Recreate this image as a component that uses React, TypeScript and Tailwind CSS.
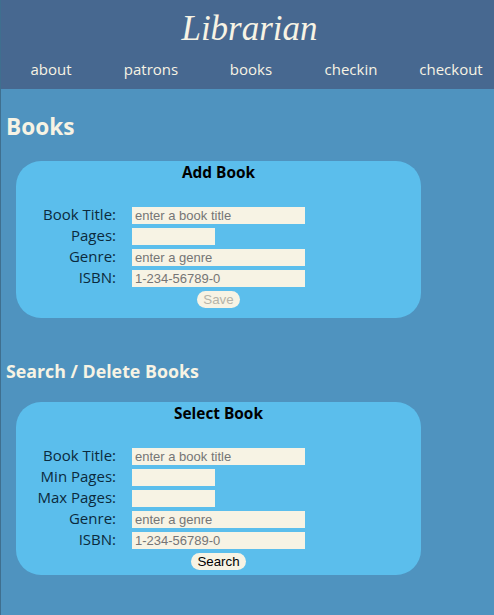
import React from "react";

const navItems = ["about", "patrons", "books", "checkin", "checkout"];

type Field = { label: string; placeholder?: string; short?: boolean };

const addFields: Field[] = [
  { label: "Book Title:", placeholder: "enter a book title" },
  { label: "Pages:", short: true },
  { label: "Genre:", placeholder: "enter a genre" },
  { label: "ISBN:", placeholder: "1-234-56789-0" },
];

const searchFields: Field[] = [
  { label: "Book Title:", placeholder: "enter a book title" },
  { label: "Min Pages:", short: true },
  { label: "Max Pages:", short: true },
  { label: "Genre:", placeholder: "enter a genre" },
  { label: "ISBN:", placeholder: "1-234-56789-0" },
];

const BookForm = ({ title, fields, button, disabled }: { title: string; fields: Field[]; button: string; disabled?: boolean }) => (
  <div className={`ml-[15px] w-[405px] rounded-[25px] bg-[#5bbeec] pt-[2px] ${disabled ? "pb-[10px]" : "pb-[5px]"}`}>
    <h3 className="h-[44px] text-center text-[15.4px] leading-[20px] font-bold text-black">{title}</h3>
    <div className="flex flex-col gap-1">
      {fields.map((f) => (
        <div key={f.label} className="flex h-[17px] items-center">
          <label className="mb-[2px] w-[100px] text-right text-[15px] leading-[17px] text-[#0b2a3c]">{f.label}</label>
          <input
            readOnly
            placeholder={f.placeholder}
            className={`ml-4 h-[17px] ${f.short ? "w-[83px]" : "w-[173px]"} bg-[#f7f3e4] px-[3px] font-['Liberation_Sans',sans-serif] text-[13px] text-black outline-none placeholder:text-[#757575]`}
          />
        </div>
      ))}
    </div>
    <div className="mt-1 flex justify-center">
      <button
        disabled={disabled}
        className={`h-[17px] rounded-full bg-[#f7f3e4] px-[6px] font-['Liberation_Sans',sans-serif] text-[13.3px] leading-[17px] ${disabled ? "text-[#b5b3a8]" : "text-black"}`}
      >
        {button}
      </button>
    </div>
  </div>
);

export default function App() {
  return (
    <div className="min-h-screen overflow-hidden border-l border-[#3f6f8f] bg-[#4f93bf] font-['Open_Sans',sans-serif] text-[#f7f3e4]">
      <header className="h-[89px] bg-[#476890]">
        <h1 className="pt-[9px] pl-[4px] text-center font-['Liberation_Serif',serif] text-[35px] leading-[40px] italic">Librarian</h1>
        <nav className="mt-[8px] flex">
          {navItems.map((item) => (
            <a key={item} className="w-[100px] shrink-0 text-center text-[15px] leading-[24px]">
              {item}
            </a>
          ))}
        </nav>
      </header>
      <main className="pl-[5px]">
        <h2 className="pt-[22px] pb-[18px] text-[22.6px] leading-[32px] font-bold">Books</h2>
      </main>
      <BookForm title="Add Book" fields={addFields} button="Save" disabled />
      <h2 className="mt-[41px] mb-[19px] pl-[5px] text-[17.8px] leading-[24px] font-bold">Search / Delete Books</h2>
      <BookForm title="Select Book" fields={searchFields} button="Search" />
    </div>
  );
}
